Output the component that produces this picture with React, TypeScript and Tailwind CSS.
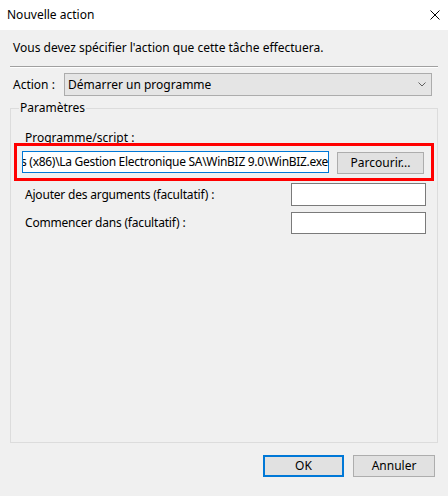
import React from "react"

const font = { fontFamily: '"Noto Sans", "Liberation Sans", sans-serif' }

function CloseIcon() {
  return (
    <svg width="10" height="10" viewBox="0 0 10 10" className="block">
      <path d="M0.5 0.5 L9.5 9.5 M9.5 0.5 L0.5 9.5" stroke="#000" strokeWidth="1" fill="none" />
    </svg>
  )
}

function Chevron() {
  return (
    <svg width="8" height="5" viewBox="0 0 8 5" className="block">
      <path d="M0.5 0.5 L4 4 L7.5 0.5" stroke="#606060" strokeWidth="1" fill="none" />
    </svg>
  )
}

const App: React.FC = () => {
  return (
    <div className="w-[448px] h-[496px] flex flex-col text-[12px] leading-[16px] text-black" style={font}>
      {/* title bar */}
      <div className="h-[30px] bg-white flex items-center justify-between pl-[7px] pr-[8px]">
        <span>Nouvelle action</span>
        <CloseIcon />
      </div>

      {/* body */}
      <div className="flex-1 bg-[#f0f0f0] px-[10px] pt-[10px] flex flex-col">
        <p className="pl-[3px]">Vous devez spécifier l'action que cette tâche effectuera.</p>
        <div className="mt-[10px] border-t border-t-[#a0a0a0] border-b border-b-white" />

        {/* action select */}
        <div className="mt-[5px] flex items-center pl-[3px]">
          <span className="w-[51px]">Action :</span>
          <div className="w-[368px] h-[23px] bg-[#e5e5e5] border border-[#acacac] flex items-center justify-between pl-[3px] pr-[5px]">
            <span>Démarrer un programme</span>
            <Chevron />
          </div>
        </div>

        {/* parameters group */}
        <fieldset className="mt-[4px] h-[343px] border border-[#dcdcdc] flex flex-col">
          <legend className="ml-[8px] px-[1px]">Paramètres</legend>
          <div className="pt-[14px] pl-[14px]">Programme/script :</div>

          <div className="-mt-[3px] mx-[3px] border-[3px] border-[#ff0000] pl-[5px] pr-[7px] pt-[5px] pb-[4px] flex items-start justify-between">
            <div className="w-[307px] h-[22px] bg-white border border-[#0078d7] flex items-center justify-end overflow-hidden whitespace-nowrap pr-[2px] tracking-[-0.3px]">
              <span>C:\Program Files (x86)\La Gestion Electronique SA\WinBIZ 9.0\WinBIZ.exe</span>
              <span className="w-px h-[14px] bg-black -ml-[2px]" />
            </div>
            <button className="mt-[1px] w-[87px] h-[22px] bg-[#e1e1e1] border border-[#adadad] flex items-center justify-center">
              Parcourir...
            </button>
          </div>

          <div className="mt-[2px] flex items-center justify-between pl-[14px] pr-[11px]">
            <span className="tracking-[-0.2px]">Ajouter des arguments (facultatif) :</span>
            <div className="w-[135px] h-[23px] bg-white border border-[#7a7a7a]" />
          </div>
          <div className="mt-[6px] flex items-center justify-between pl-[14px] pr-[11px]">
            <span className="tracking-[-0.2px]">Commencer dans (facultatif) :</span>
            <div className="w-[135px] h-[22px] bg-white border border-[#7a7a7a]" />
          </div>
        </fieldset>

        {/* footer buttons */}
        <div className="mt-[12px] flex justify-end gap-[9px] pr-[3px]">
          <button className="w-[81px] h-[22px] bg-[#e1e1e1] border-2 border-[#0078d7] flex items-center justify-center">
            OK
          </button>
          <button className="w-[82px] h-[22px] bg-[#e1e1e1] border border-[#adadad] flex items-center justify-center">
            Annuler
          </button>
        </div>
      </div>
    </div>
  )
}

export default App
